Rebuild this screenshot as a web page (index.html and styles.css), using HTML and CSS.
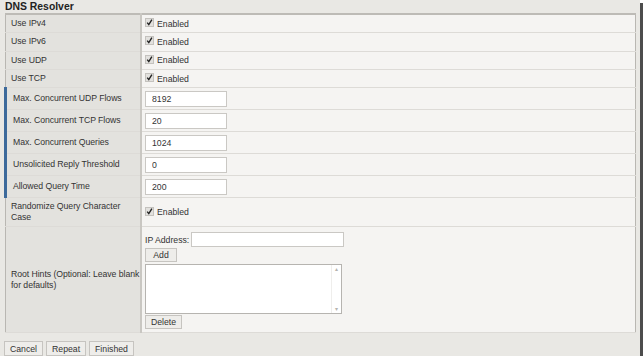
FILE: index.html
```html
<!DOCTYPE html>
<html lang="en">
<head>
  <meta charset="UTF-8">
  <title>DNS Resolver</title>
  <link rel="stylesheet" href="styles.css">
</head>
<body>
  <div class="window">
    <h1>DNS Resolver</h1>
    <table class="settings">
      <tr class="r-check">
        <td class="label">Use IPv4</td>
        <td class="value"><span class="chk"><svg class="box" viewBox="0 0 9 9"><rect x="0.5" y="0.5" width="8" height="8" fill="#e2e1de" stroke="#c4c2be"/><path d="M2.2 4.6 L3.8 6.6 L6.9 1.6" fill="none" stroke="#222" stroke-width="1.4"/></svg>Enabled</span></td>
      </tr>
      <tr class="r-check">
        <td class="label">Use IPv6</td>
        <td class="value"><span class="chk"><svg class="box" viewBox="0 0 9 9"><rect x="0.5" y="0.5" width="8" height="8" fill="#e2e1de" stroke="#c4c2be"/><path d="M2.2 4.6 L3.8 6.6 L6.9 1.6" fill="none" stroke="#222" stroke-width="1.4"/></svg>Enabled</span></td>
      </tr>
      <tr class="r-check">
        <td class="label">Use UDP</td>
        <td class="value"><span class="chk"><svg class="box" viewBox="0 0 9 9"><rect x="0.5" y="0.5" width="8" height="8" fill="#e2e1de" stroke="#c4c2be"/><path d="M2.2 4.6 L3.8 6.6 L6.9 1.6" fill="none" stroke="#222" stroke-width="1.4"/></svg>Enabled</span></td>
      </tr>
      <tr class="r-check">
        <td class="label">Use TCP</td>
        <td class="value"><span class="chk"><svg class="box" viewBox="0 0 9 9"><rect x="0.5" y="0.5" width="8" height="8" fill="#e2e1de" stroke="#c4c2be"/><path d="M2.2 4.6 L3.8 6.6 L6.9 1.6" fill="none" stroke="#222" stroke-width="1.4"/></svg>Enabled</span></td>
      </tr>
      <!-- campos con barra azul -->
      <tr class="r-field">
        <td class="label sub">Max. Concurrent UDP Flows</td>
        <td class="value"><input class="txt" type="text" value="8192"></td>
      </tr>
      <tr class="r-field">
        <td class="label sub">Max. Concurrent TCP Flows</td>
        <td class="value"><input class="txt" type="text" value="20"></td>
      </tr>
      <tr class="r-field">
        <td class="label sub">Max. Concurrent Queries</td>
        <td class="value"><input class="txt" type="text" value="1024"></td>
      </tr>
      <tr class="r-field">
        <td class="label sub">Unsolicited Reply Threshold</td>
        <td class="value"><input class="txt" type="text" value="0"></td>
      </tr>
      <tr class="r-field">
        <td class="label sub">Allowed Query Time</td>
        <td class="value"><input class="txt" type="text" value="200"></td>
      </tr>
      <tr class="r-rand">
        <td class="label">Randomize Query Character Case</td>
        <td class="value"><span class="chk"><svg class="box" viewBox="0 0 9 9"><rect x="0.5" y="0.5" width="8" height="8" fill="#e2e1de" stroke="#c4c2be"/><path d="M2.2 4.6 L3.8 6.6 L6.9 1.6" fill="none" stroke="#222" stroke-width="1.4"/></svg>Enabled</span></td>
      </tr>
      <tr class="r-hints">
        <td class="label">Root Hints (Optional: Leave blank for defaults)</td>
        <td class="value">
          <div class="ip-line">IP Address: <input class="ip" type="text"></div>
          <button class="btn add">Add</button>
          <div class="list">
            <textarea></textarea>
            <div class="scroll"><span>&#9652;</span><span>&#9662;</span></div>
          </div>
          <button class="btn">Delete</button>
        </td>
      </tr>
    </table>
    <div class="actions">
      <button class="btn">Cancel</button>
      <button class="btn">Repeat</button>
      <button class="btn">Finished</button>
    </div>
  </div>
</body>
</html>
```
FILE: styles.css
```css
html, body {
  margin: 0;
  padding: 0;
  background: #fff;
}
body {
  font-family: "Liberation Sans", Arial, sans-serif;
  font-size: 8.7px;
  color: #333;
}
.window {
  width: 640px;
  height: 356px;
  box-sizing: border-box;
  background: #e9e8e4;
  box-shadow: 3px 3px 0 #4d4d4d;
  padding: 0 4px;
}
h1 {
  margin: 0;
  padding: 1px 0 0 1px;
  height: 12px;
  line-height: 12px;
  font-size: 10.4px;
  font-weight: bold;
  color: #222;
}
.settings {
  width: 632px;
  table-layout: fixed;
  border-collapse: collapse;
  border: 1px solid #b9b7b2;
  border-top: 2px solid #bdbbb6;
}
.settings td {
  padding: 0;
  border-bottom: 1px solid #dddbd7;
  vertical-align: middle;
}
.label {
  width: 129px;
  background: #e3e2de;
  border-right: 2px solid #c9c7c2;
  padding-left: 5px !important;
  line-height: 11px;
  letter-spacing: -0.05px;
}
.label.sub {
  border-left: 3px solid #3d6a9b;
  padding-left: 6px !important;
}
.value {
  background: #f5f4f2;
  padding-left: 3px !important;
}
.r-check td { height: 17.3px; }
.r-field td { height: 21px; }
.r-rand td { height: 28px; }
.r-hints td { height: 105px; }

.chk {
  display: flex;
  align-items: center;
  gap: 3px;
}
.box {
  width: 9px;
  height: 9px;
  margin-top: -2px;
}
.txt {
  box-sizing: border-box;
  width: 82px;
  height: 16px;
  border: 1px solid #cac8c4;
  background: #fff;
  font: inherit;
  color: #333;
  padding: 0 6px;
  margin: 0;
  display: block;
}
.ip-line {
  display: flex;
  align-items: center;
  gap: 2px;
  margin-top: 2px;
}
.ip {
  box-sizing: border-box;
  width: 153px;
  height: 15px;
  border: 1px solid #cac8c4;
  background: #fff;
  margin: 0;
}
.list {
  display: flex;
  box-sizing: border-box;
  width: 197px;
  height: 50px;
  margin: 2px 0 1px;
  border: 1px solid #b6b4b0;
  background: #fff;
}
.list textarea {
  flex: 1;
  border: none;
  resize: none;
  margin: 0;
  padding: 0;
  outline: none;
}
.scroll {
  width: 9px;
  display: flex;
  flex-direction: column;
  justify-content: space-between;
  align-items: center;
  color: #b5b3af;
  font-size: 6px;
  line-height: 8px;
  border-left: 1px solid #efeeec;
}
.btn {
  display: block;
  font: inherit;
  color: #333;
  background: #eeedea;
  border: 1px solid #c6c4c0;
  border-radius: 0;
  height: 14px;
  padding: 0 5px;
  margin: 1px 0 0;
  line-height: 12px;
}
.btn.add {
  min-width: 32px;
}
.actions {
  display: flex;
  gap: 3px;
  margin-top: 7px;
}
.actions .btn {
  height: 15px;
  padding: 0 5px;
}
```
